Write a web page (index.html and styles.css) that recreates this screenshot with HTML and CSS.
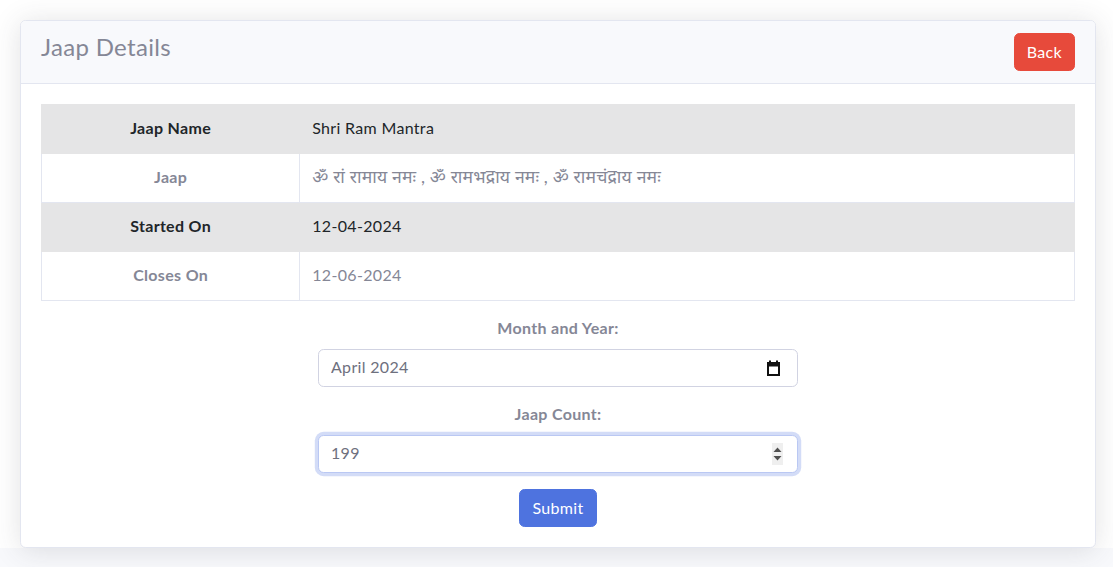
FILE: index.html
```html
<!DOCTYPE html>
<html lang="en">
<head>
<meta charset="utf-8">
<title>Jaap Details</title>
<link rel="stylesheet" href="styles.css">
</head>
<body>
<div class="wrapper">
  <div class="card">
    <div class="card-header">
      <h4 class="card-title">Jaap Details</h4>
      <button class="btn btn-danger" type="button">Back</button>
    </div>
    <div class="card-body">
      <table class="details">
        <tbody>
          <tr class="striped">
            <th>Jaap Name</th>
            <td>Shri Ram Mantra</td>
          </tr>
          <tr>
            <th>Jaap</th>
            <td class="deva">ॐ रां रामाय नमः , ॐ रामभद्राय नमः , ॐ रामचंद्राय नमः</td>
          </tr>
          <tr class="striped">
            <th>Started On</th>
            <td>12-04-2024</td>
          </tr>
          <tr>
            <th>Closes On</th>
            <td>12-06-2024</td>
          </tr>
        </tbody>
      </table>
      <form class="entry-form">
        <div class="form-group">
          <label for="month">Month and Year:</label>
          <div class="field">
            <input class="field-input" id="month" type="text" value="April 2024">
            <svg class="cal-icon" width="13" height="16" viewBox="0 0 13 16" aria-hidden="true">
              <rect x="2" y="0.5" width="2" height="3" fill="#111"/>
              <rect x="9" y="0.5" width="2" height="3" fill="#111"/>
              <rect x="1" y="3" width="11" height="12" fill="none" stroke="#111" stroke-width="2"/>
              <rect x="0" y="2.5" width="13" height="4" fill="#111"/>
            </svg>
          </div>
        </div>
        <div class="form-group">
          <label for="count">Jaap Count:</label>
          <div class="field focused">
            <input class="field-input" id="count" type="number" value="199" autofocus>
            <span class="spinner" aria-hidden="true">
              <svg width="11" height="22" viewBox="0 0 11 22">
                <path d="M1.5 9 L5.5 4.5 L9.5 9 Z" fill="#505050"/>
                <path d="M1.5 13 L5.5 17.5 L9.5 13 Z" fill="#505050"/>
              </svg>
            </span>
          </div>
        </div>
        <button class="btn btn-primary" type="button">Submit</button>
      </form>
    </div>
  </div>
</div>
</body>
</html>
```

FILE: styles.css
```css
* { box-sizing: border-box; }

html, body {
  margin: 0;
  height: 100%;
}

body {
  background: #f8f9fc;
  font-family: "Lato", "Noto Sans", sans-serif;
  font-size: 16px;
  line-height: 1.5;
  letter-spacing: 0.02em;
  color: #858796;
}

.wrapper {
  background: #fff;
  padding: 20px 17px 0 20px;
}

.card {
  background: #fff;
  border: 1px solid #e3e6f0;
  border-radius: 5.6px;
  box-shadow: 0 2.4px 28px 0 rgba(58, 59, 69, 0.15);
  overflow: hidden;
}

.card-header {
  background: #f8f9fc;
  border-bottom: 1px solid #e3e6f0;
  padding: 12px 20px;
  display: flex;
  justify-content: space-between;
  align-items: flex-start;
}

.card-title {
  margin: 0;
  font-size: 24px;
  font-weight: 400;
  line-height: 1.2;
  color: #858796;
}

.btn {
  font-family: inherit;
  font-size: 16px;
  line-height: 1.5;
  letter-spacing: 0.02em;
  padding: 6px 12px;
  border-radius: 5.6px;
  border: 1px solid transparent;
  color: #fff;
  cursor: pointer;
}

.btn-danger {
  background: #e74a3b;
  border-color: #e74a3b;
}

.btn-primary {
  background: #4e73df;
  border-color: #4e73df;
}

.card-body {
  padding: 20px;
}

.details {
  width: 100%;
  border-collapse: collapse;
  margin-bottom: 16px;
}

.details th,
.details td {
  border: 1px solid #e3e6f0;
  padding: 11px 12px 13px;
  text-align: left;
  vertical-align: top;
}

.details th {
  width: 25%;
  text-align: center;
  font-weight: 700;
}

.details tr.striped th,
.details tr.striped td {
  background: #e5e5e6;
  color: #212529;
  border-color: #e5e5e6;
}

.details .deva {
  font-size: 17.6px;
  letter-spacing: 0.01em;
  padding-top: 10px;
  padding-bottom: 12px;
  line-height: 26px;
}

.entry-form {
  display: flex;
  flex-direction: column;
  align-items: center;
}

.form-group {
  width: 480px;
  margin-bottom: 16px;
  display: flex;
  flex-direction: column;
  align-items: center;
}

.form-group label {
  font-weight: 700;
  line-height: 22px;
  padding-bottom: 2px;
  margin-bottom: 8px;
}

.field {
  width: 100%;
  height: 38px;
  display: flex;
  align-items: center;
  padding: 0 17px 0 12px;
  background: #fff;
  border: 1px solid #d1d3e2;
  border-radius: 5.6px;
}

.field.focused {
  border-color: #bac8f3;
  box-shadow: 0 0 0 3.2px rgba(78, 115, 223, 0.25);
  padding-right: 14px;
}

.field-input {
  flex: 1;
  min-width: 0;
  height: 100%;
  padding: 0 0 3px;
  border: 0;
  outline: none;
  background: transparent;
  font-family: inherit;
  font-size: 16px;
  letter-spacing: 0.02em;
  color: #6e707e;
  caret-color: #333;
}

.field-input::-webkit-inner-spin-button,
.field-input::-webkit-outer-spin-button {
  -webkit-appearance: none;
  margin: 0;
}

.field-input[type="number"] {
  -moz-appearance: textfield;
}

.cal-icon {
  flex: none;
  display: block;
}

.spinner {
  flex: none;
  width: 11px;
  height: 22px;
  background: #efefef;
  display: flex;
}
```
